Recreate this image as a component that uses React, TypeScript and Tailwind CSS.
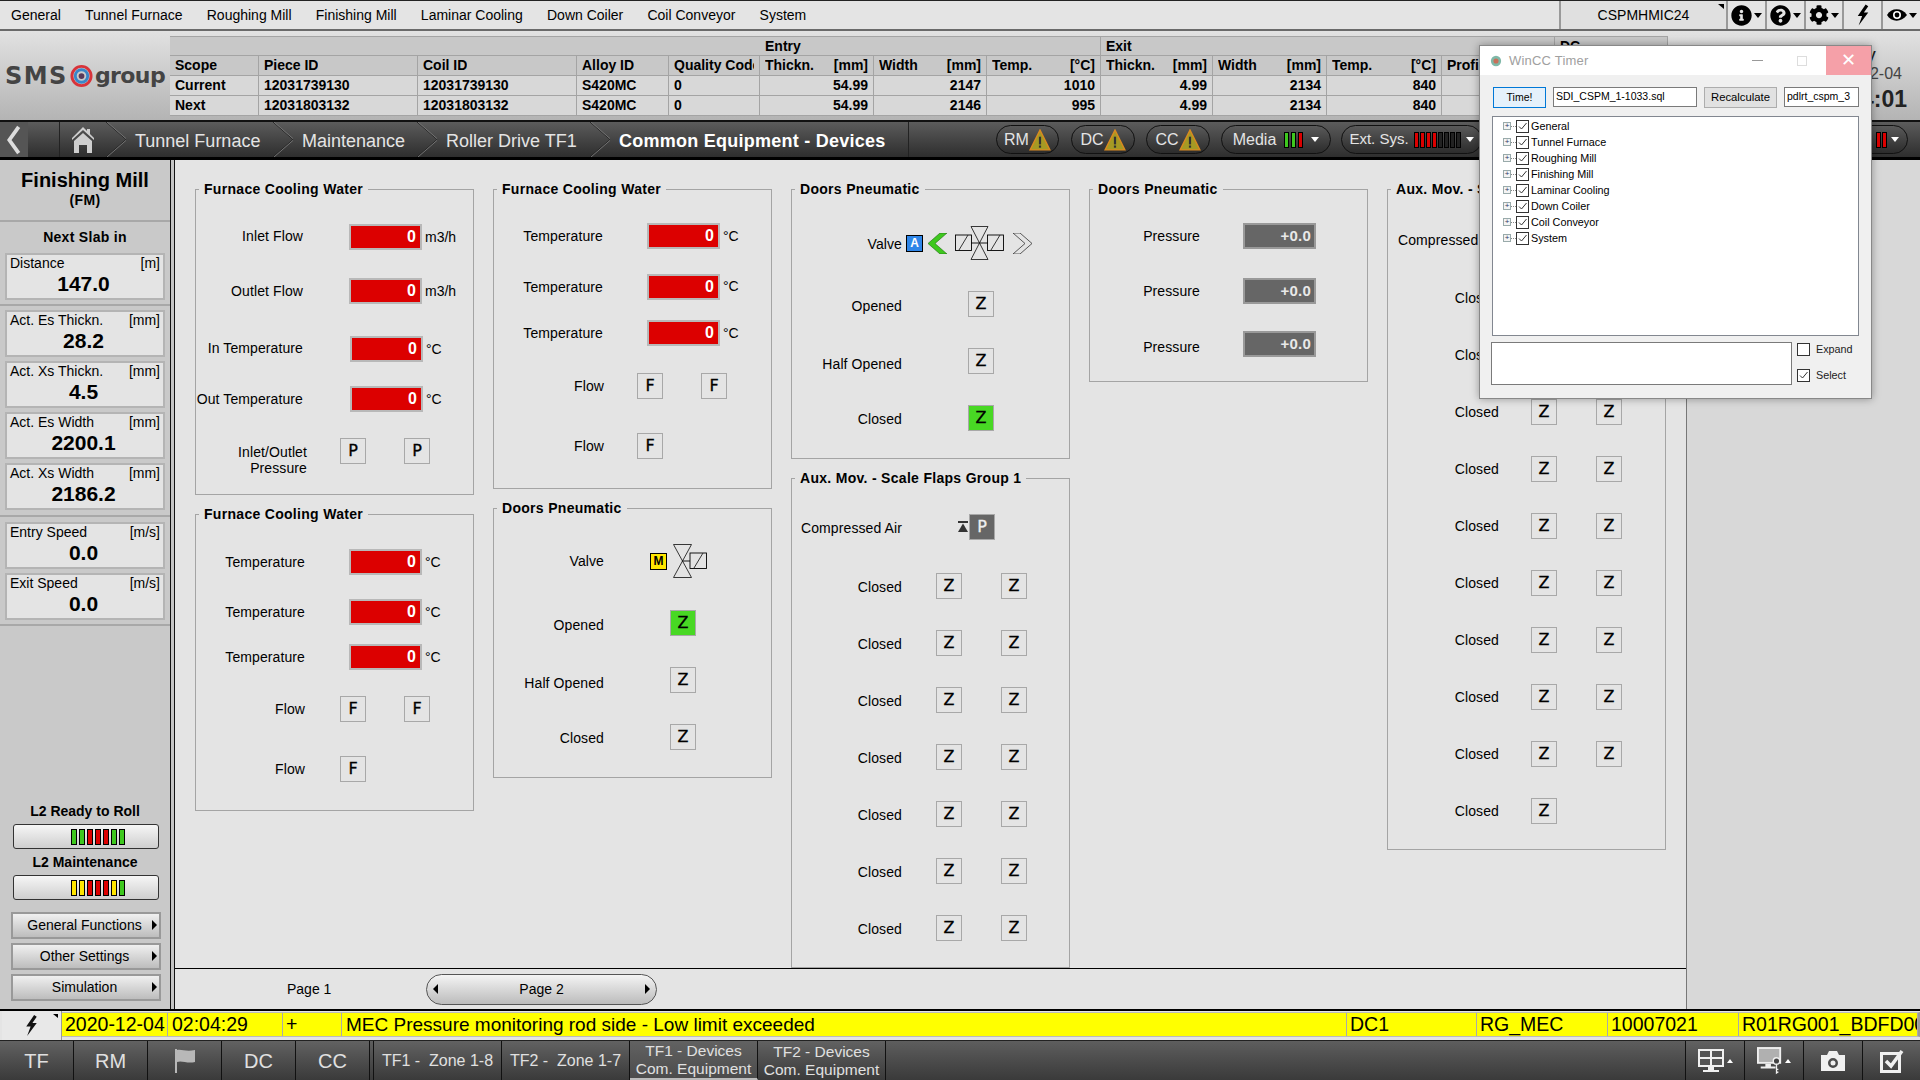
import type { ReactNode } from 'react';
import { FaCog, FaInfoCircle, FaQuestionCircle } from 'react-icons/fa';

const MENU = ['General', 'Tunnel Furnace', 'Roughing Mill', 'Finishing Mill', 'Laminar Cooling', 'Down Coiler', 'Coil Conveyor', 'System'];

function Bolt({ className }: { className?: string }) {
  return (
    <svg viewBox="0 0 16 24" className={className} fill="currentColor">
      <path d="M11 0 2 13h5L3 24l11-15H9l5-7z" />
    </svg>
  );
}

function Caret({ className }: { className?: string }) {
  return <span className={`inline-block w-0 h-0 border-x-[4px] border-x-transparent border-t-[5px] ${className ?? 'border-t-white'}`} />;
}

function Arrow({ dir }: { dir: 'left' | 'right' }) {
  return dir === 'right'
    ? <span className="block w-0 h-0 border-y-[5px] border-y-transparent border-l-[5px] border-l-black" />
    : <span className="block w-0 h-0 border-y-[5px] border-y-transparent border-r-[5px] border-r-black" />;
}

function TopBar() {
  return (
    <div className="h-[31px] flex bg-[#e4e4e4] border-t border-t-[#222] border-b-2 border-b-[#6a6a6a] text-[14px] text-black">
      <div className="flex-1 flex items-center gap-[24.2px] pl-[11px]">
        {MENU.map(m => <span key={m}>{m}</span>)}
      </div>
      <div className="w-[167px] flex items-center justify-center border-l-2 border-l-[#999] bg-[#e0e0e0] relative">
        CSPMHMIC24
        <span className="absolute top-[3px] right-[2px] w-0 h-0 border-l-[6px] border-l-transparent border-t-[5px] border-t-black" />
      </div>
      <div className="w-[194px] flex">
        <TopIcon><FaInfoCircle className="w-[21px] h-[21px]" /><Caret className="border-t-black" /></TopIcon>
        <TopIcon><FaQuestionCircle className="w-[21px] h-[21px]" /><Caret className="border-t-black" /></TopIcon>
        <TopIcon><FaCog className="w-[20px] h-[20px]" /><Caret className="border-t-black" /></TopIcon>
        <TopIcon><Bolt className="w-[14px] h-[24px]" /></TopIcon>
        <TopIcon>
          <svg viewBox="0 0 20 16" className="w-[20px] h-[16px]">
            <path d="M0 8c4-7 14-8 20 0-6 8-16 7-20 0z" fill="black" />
            <circle cx="10" cy="8" r="4" fill="white" />
            <circle cx="10" cy="8" r="2.4" fill="black" />
          </svg>
          <Caret className="border-t-black" />
        </TopIcon>
      </div>
    </div>
  );
}

function TopIcon({ children }: { children: ReactNode }) {
  return <div className="flex-1 flex items-center justify-center gap-[2px] border-l-2 border-l-[#999] text-black">{children}</div>;
}

const cellBase = 'border-r border-b border-[#a4a4a4] flex items-center px-[5px] h-[20px] whitespace-nowrap overflow-hidden';

function Hd({ label, unit }: { label: string; unit?: string }) {
  return (
    <div className={`${cellBase} justify-between bg-[#c8c8c8]`}>
      <span className="min-w-0 overflow-hidden">{label}</span>{unit && <span>{unit}</span>}
    </div>
  );
}

function DataRow({ cells }: { cells: string[] }) {
  return (
    <>
      {cells.map((c, i) => (
        <div key={i} className={`${cellBase} bg-[#d8d8d8] ${i > 4 ? 'justify-end' : ''}`}>{c}</div>
      ))}
    </>
  );
}

function Header() {
  return (
    <div className="h-[89px] flex bg-gradient-to-b from-[#e2e2e2] to-[#b4b4b4] text-[14px] font-bold text-black relative">
      <div className="w-[170px] flex items-center justify-center gap-[2px] text-[#444] text-[22px] font-['DejaVu_Sans',sans-serif]">
        <span className="text-[24px] tracking-[1.5px]">SMS</span>
        <svg viewBox="0 0 24 24" className="w-[23px] h-[24px]">
          <circle cx="12" cy="12" r="10" fill="none" stroke="#d8333a" strokeWidth="3" />
          <circle cx="12" cy="12" r="6.5" fill="none" stroke="#3a86c8" strokeWidth="3" />
          <circle cx="12" cy="12" r="3" fill="#5a3a5a" />
        </svg>
        <span className="tracking-[-0.6px]">group</span>
      </div>
      <div className="mt-[5px] w-[1498px] grid grid-cols-[89px_159px_159px_92px_91px_114px_113px_114px_112px_114px_115px_113px_113px] content-start">
        <div className="col-span-5 h-[20px] bg-[#c8c8c8] border-b border-[#a4a4a4] border-t" />
        <div className="col-span-3 h-[20px] bg-[#c8c8c8] border-b border-r border-t border-[#a4a4a4] flex items-center px-[5px]">Entry</div>
        <div className="col-span-4 h-[20px] bg-[#c8c8c8] border-b border-r border-t border-[#a4a4a4] flex items-center px-[5px]">Exit</div>
        <div className="h-[20px] bg-[#c8c8c8] border-b border-r border-t border-[#a4a4a4] flex items-center px-[5px]">DC</div>
        <Hd label="Scope" />
        <Hd label="Piece ID" />
        <Hd label="Coil ID" />
        <Hd label="Alloy ID" />
        <Hd label="Quality Code" />
        <Hd label="Thickn." unit="[mm]" />
        <Hd label="Width" unit="[mm]" />
        <Hd label="Temp." unit="[°C]" />
        <Hd label="Thickn." unit="[mm]" />
        <Hd label="Width" unit="[mm]" />
        <Hd label="Temp." unit="[°C]" />
        <Hd label="Profile" />
        <Hd label="Temp." />
        <DataRow cells={['Current', '12031739130', '12031739130', 'S420MC', '0', '54.99', '2147', '1010', '4.99', '2134', '840', '', '']} />
        <DataRow cells={['Next', '12031803132', '12031803132', 'S420MC', '0', '54.99', '2146', '995', '4.99', '2134', '840', '', '']} />
      </div>
      <div className="flex-1 flex flex-col items-center pl-[134px] text-[#222] font-normal whitespace-nowrap">
        <span className="mt-[13px] mr-[24px] text-[20px] leading-[22px]">Today</span>
        <span className="text-[16px] leading-[16px] text-[#444]">2020-12-04</span>
        <span className="mt-[5px] text-[23px] leading-[25px] font-bold">02:04:01</span>
      </div>
    </div>
  );
}

function Crumb({ label, className }: { label: string; className: string }) {
  return (
    <div className={`relative h-full flex items-center pt-[3px] ${className}`}>
      <svg viewBox="0 0 20 40" preserveAspectRatio="none" className="absolute left-0 top-0 w-[20px] h-full">
        <path d="M0 0l20 20L0 40" fill="none" stroke="#222" strokeWidth="1" />
        <path d="M1 0l20 20L1 40" fill="none" stroke="#777" strokeWidth="1" />
      </svg>
      {label}
    </div>
  );
}

function Warn() {
  return (
    <svg viewBox="0 0 20 20" className="w-[22px] h-[22px]">
      <path d="M10 1 19 19H1z" fill="#a59a24" stroke="#d98a20" strokeWidth="1.3" />
      <rect x="9" y="7" width="2" height="7" fill="#333" />
      <rect x="9" y="15" width="2" height="2" fill="#333" />
    </svg>
  );
}

function Bars({ colors, gapClass }: { colors: string[]; gapClass: string }) {
  return (
    <span className={`flex ${gapClass}`}>
      {colors.map((c, i) => <span key={i} className={`w-[5px] h-[16px] border border-black ${c}`} />)}
    </span>
  );
}

const R = 'bg-[#dc0000]';
const G = 'bg-[#3ec81e]';
const Y = 'bg-[#ffe600]';
const K = 'bg-[#222]';

function Pill({ className, children }: { className: string; children: ReactNode }) {
  return (
    <div className={`h-[29px] rounded-full border border-[#111] bg-gradient-to-b from-[#5a5a5a] to-[#2c2c2c] flex items-center justify-center ${className}`}>
      {children}
    </div>
  );
}

function Breadcrumb() {
  return (
    <div className="h-[40px] flex bg-gradient-to-b from-[#5c5c5c] to-[#2e2e2e] border-b-[3px] border-b-black border-t-2 border-t-[#111] text-[18px] text-[#e4e4e4]">
      <div className="w-[28px] flex items-center justify-center bg-[#555]">
        <svg viewBox="0 0 18 32" className="w-[18px] h-[30px]"><path d="M14 2 4 16l10 14" fill="none" stroke="#ddd" strokeWidth="4" /></svg>
      </div>
      <div className="w-[32px] border-r border-r-[#222]" />
      <div className="w-[46px] flex items-center justify-center">
        <svg viewBox="0 0 24 28" className="w-[24px] h-[28px]" fill="#cfcfcf">
          <path d="M12 1 1 12v2l11-10 11 10v-2l-4-4V3h-3v2z" />
          <path fillRule="evenodd" d="M3 15 12 7l9 8v12h-5v-8H8v8H3z" />
        </svg>
      </div>
      <Crumb label="Tunnel Furnace" className="w-[167px] pl-[29px]" />
      <Crumb label="Maintenance" className="w-[144px] pl-[29px]" />
      <Crumb label="Roller Drive TF1" className="w-[173px] pl-[29px]" />
      <Crumb label="Common Equipment - Devices" className="w-[318px] pl-[29px] font-bold text-white tracking-[0.25px]" />
      <div className="border-l border-l-[#222] flex-1 flex items-center pl-[87px] text-[16px]">
        <Pill className="w-[63px] mr-[12px]">RM<Warn /></Pill>
        <Pill className="w-[64px] mr-[11px]">DC<Warn /></Pill>
        <Pill className="w-[64px] mr-[11px]">CC<Warn /></Pill>
        <Pill className="w-[110px] mr-[10px] gap-[8px]">Media<Bars colors={[G, G, R]} gapClass="gap-[2px]" /><Caret /></Pill>
        <Pill className="w-[141px] mr-[10px] gap-[5px] text-[15px]">Ext. Sys.<Bars colors={[R, R, R, R, K, K, K, K]} gapClass="gap-[1px]" /><Caret /></Pill>
        <Pill className="w-[416px] justify-end pr-[8px] gap-[4px]"><Bars colors={[R, R]} gapClass="gap-[1px]" /><Caret /></Pill>
      </div>
    </div>
  );
}

function InfoCard({ label, unit, value, className }: { label: string; unit: string; value: string; className: string }) {
  return (
    <div className={`w-[160px] h-[47px] mx-[5px] bg-[#e4e4e4] border-2 border-[#b4b4b4] flex flex-col ${className}`}>
      <div className="flex justify-between pl-[3px] pr-[3px] text-[14px] leading-[17px]">
        <span>{label}</span><span>{unit}</span>
      </div>
      <div className="text-center text-[21px] font-bold leading-[24px] -ml-[3px]">{value}</div>
    </div>
  );
}

function StatusButton({ colors }: { colors: string[] }) {
  return (
    <div className="w-[146px] h-[25px] mx-[13px] rounded-[3px] border border-[#333] bg-gradient-to-b from-[#f6f6f6] to-[#cfcfcf] flex items-center justify-end pr-[33px]">
      <span className="flex gap-[2px]">
        {colors.map((c, i) => <span key={i} className={`w-[6px] h-[16px] border border-black ${c}`} />)}
      </span>
    </div>
  );
}

function SideButton({ label }: { label: string }) {
  return (
    <div className="relative w-[150px] h-[27px] mx-[11px] border-2 border-[#999] bg-gradient-to-b from-[#f0f0f0] to-[#bdbdbd] flex items-center justify-center pr-[3px] text-[14px]">
      {label}
      <span className="absolute right-[2px] top-[6px]"><Arrow dir="right" /></span>
    </div>
  );
}

function Sidebar() {
  return (
    <div className="w-[170px] flex flex-col bg-[#c9c9c9] text-black">
      <div className="h-[62px] border-b-2 border-b-[#a8a8a8] flex flex-col items-center pt-[8px]">
        <span className="text-[20px] font-bold leading-[24px]">Finishing Mill</span>
        <span className="text-[14px] font-bold leading-[16px] tracking-[0.4px]">(FM)</span>
      </div>
      <div className="h-[31px] flex items-center justify-center text-[14px] font-bold tracking-[0.3px]">Next Slab in</div>
      <InfoCard label="Distance" unit="[m]" value="147.0" className="mb-[4px]" />
      <div className="border-t-2 border-t-[#a8a8a8] mb-[4px]" />
      <InfoCard label="Act. Es Thickn." unit="[mm]" value="28.2" className="mb-[4px]" />
      <InfoCard label="Act. Xs Thickn." unit="[mm]" value="4.5" className="mb-[4px]" />
      <InfoCard label="Act. Es Width" unit="[mm]" value="2200.1" className="mb-[4px]" />
      <InfoCard label="Act. Xs Width" unit="[mm]" value="2186.2" className="mb-[5px]" />
      <div className="border-t-2 border-t-[#a8a8a8] mb-[5px]" />
      <InfoCard label="Entry Speed" unit="[m/s]" value="0.0" className="mb-[4px]" />
      <InfoCard label="Exit Speed" unit="[m/s]" value="0.0" className="mb-[4px]" />
      <div className="border-t-2 border-t-[#a8a8a8]" />
      <div className="flex-1 flex flex-col justify-end pb-[8px]">
        <div className="h-[25px] flex items-center justify-center text-[14px] font-bold">L2 Ready to Roll</div>
        <StatusButton colors={[G, G, R, R, R, G, G]} />
        <div className="h-[26px] flex items-center justify-center text-[14px] font-bold">L2 Maintenance</div>
        <StatusButton colors={[Y, Y, R, R, R, Y, G]} />
        <div className="h-[12px]" />
        <SideButton label="General Functions" />
        <div className="h-[4px]" />
        <SideButton label="Other Settings" />
        <div className="h-[4px]" />
        <SideButton label="Simulation" />
      </div>
    </div>
  );
}

function Panel({ title, className, children }: { title: string; className: string; children: ReactNode }) {
  return (
    <div className={`relative w-[279px] border border-[#a4a4a4] shrink-0 ${className}`}>
      <span className="absolute -top-[10px] left-[3px] px-[5px] bg-[#e4e4e4] text-[14px] leading-[18px] font-bold tracking-[0.3px] whitespace-nowrap">{title}</span>
      {children}
    </div>
  );
}

function Row({ label, rowClass, labelClass, children }: { label: ReactNode; rowClass: string; labelClass: string; children?: ReactNode }) {
  return (
    <div className={`flex items-center ${rowClass}`}>
      <div className={`text-right text-[14px] leading-[16px] tracking-[0.1px] shrink-0 whitespace-nowrap ${labelClass}`}>{label}</div>
      {children}
    </div>
  );
}

function Value({ className, unit }: { className: string; unit: string }) {
  return (
    <>
      <div className={`w-[73px] h-[26px] bg-[#dc0000] border-2 border-[#b8b8b8] flex items-center justify-end pr-[2px] text-white font-bold text-[16px] ${className}`}>
        <span className="px-[2px]">0</span>
      </div>
      <span className="ml-[3px] text-[14px]">{unit}</span>
    </>
  );
}

function Pressure({ className }: { className: string }) {
  return (
    <div className={`w-[73px] h-[26px] bg-[#666] border-2 border-[#999] flex items-center justify-end pr-[3px] text-[#e8e8e8] font-bold text-[15px] tracking-[0.2px] ${className}`}>+0.0</div>
  );
}

function Key({ letter, className, on, dark }: { letter: string; className?: string; on?: boolean; dark?: boolean }) {
  const bg = on ? 'bg-[#48d824] text-black' : dark ? 'bg-[#666] text-[#eee]' : 'text-black';
  return (
    <div className={`w-[26px] h-[26px] shrink-0 border border-[#a8a8a8] flex items-center justify-center text-[16px] font-['DejaVu_Sans',sans-serif] [-webkit-text-stroke:0.3px] ${bg} ${className ?? ''}`}>{letter}</div>
  );
}

function ActBox({ letter, className }: { letter: string; className: string }) {
  return <div className={`w-[17px] h-[17px] border border-black flex items-center justify-center text-[12px] font-bold ${className}`}>{letter}</div>;
}

function ValveDouble() {
  return (
    <svg viewBox="0 0 49 34" className="w-[49px] h-[34px] ml-[8px]" fill="none" stroke="#222" strokeWidth="0.9">
      <path d="M16 0.5h17L16 33.5h17z" />
      <rect x="0.5" y="9" width="16" height="15.5" stroke="#000" />
      <path d="M4 24l9-15" />
      <rect x="32.5" y="9" width="16" height="15.5" stroke="#000" />
      <path d="M36 24l9-15" />
      <path d="M16 17h17" stroke="#000" />
    </svg>
  );
}

function ValveSingle() {
  return (
    <svg viewBox="0 0 34 34" className="w-[34px] h-[34px] ml-[6px]" fill="none" stroke="#222" strokeWidth="0.9">
      <path d="M0.5 0.5h18L0.5 33.5h18z" />
      <rect x="17" y="9" width="16.5" height="15.5" stroke="#000" />
      <path d="M21 24l9-15" />
      <path d="M9 17h8" stroke="#000" />
    </svg>
  );
}

function AirIcon({ className }: { className: string }) {
  return (
    <svg viewBox="0 0 10 11" className={`w-[10px] h-[11px] ${className}`} fill="#333">
      <rect x="0" y="0" width="10" height="2" />
      <path d="M5 2.5 10 11H0z" />
    </svg>
  );
}

function ClosedRows({ rowCount, labelClass, firstClass, secondClass }: { rowCount: number; labelClass: string; firstClass: string; secondClass: string }) {
  return (
    <>
      {Array.from({ length: rowCount }).map((_, i) => (
        <Row key={i} label="Closed" rowClass="h-[57px]" labelClass={labelClass}>
          <Key letter="Z" className={firstClass} />
          <Key letter="Z" className={secondClass} />
        </Row>
      ))}
    </>
  );
}

function Panels() {
  return (
    <div className="flex gap-[19px] pl-[20px] pt-[29px] h-[809px] border-b border-b-black text-black">
      <div className="flex flex-col gap-[19px]">
        <Panel title="Furnace Cooling Water" className="h-[306px] pt-[20px]">
          <Row label="Inlet Flow" rowClass="h-[54px]" labelClass="w-[107px] pb-[2px]"><Value className="ml-[46px]" unit="m3/h" /></Row>
          <Row label="Outlet Flow" rowClass="h-[54px]" labelClass="w-[107px]"><Value className="ml-[46px]" unit="m3/h" /></Row>
          <Row label="In Temperature" rowClass="h-[62px]" labelClass="w-[107px] pb-[2px]"><Value className="ml-[47px]" unit="°C" /></Row>
          <Row label="Out Temperature" rowClass="h-[38px]" labelClass="w-[107px]"><Value className="ml-[47px]" unit="°C" /></Row>
          <Row label={<>Inlet/Outlet<br />Pressure</>} rowClass="h-[66px]" labelClass="w-[111px] mt-[17px] leading-[16px]">
            <Key letter="P" className="ml-[33px]" />
            <Key letter="P" className="ml-[38px]" />
          </Row>
        </Panel>
        <Panel title="Furnace Cooling Water" className="h-[297px] pt-[20px]">
          <Row label="Temperature" rowClass="h-[54px]" labelClass="w-[109px]"><Value className="ml-[44px]" unit="°C" /></Row>
          <Row label="Temperature" rowClass="h-[46px]" labelClass="w-[109px]"><Value className="ml-[44px]" unit="°C" /></Row>
          <Row label="Temperature" rowClass="h-[44px]" labelClass="w-[109px]"><Value className="ml-[44px]" unit="°C" /></Row>
          <Row label="Flow" rowClass="h-[60px]" labelClass="w-[109px]">
            <Key letter="F" className="ml-[35px]" />
            <Key letter="F" className="ml-[38px]" />
          </Row>
          <Row label="Flow" rowClass="h-[60px]" labelClass="w-[109px]"><Key letter="F" className="ml-[35px]" /></Row>
        </Panel>
      </div>

      <div className="flex flex-col gap-[19px]">
        <Panel title="Furnace Cooling Water" className="h-[300px] pt-[20px]">
          <Row label="Temperature" rowClass="h-[52px]" labelClass="w-[109px]"><Value className="ml-[44px]" unit="°C" /></Row>
          <Row label="Temperature" rowClass="h-[49px]" labelClass="w-[109px]"><Value className="ml-[44px]" unit="°C" /></Row>
          <Row label="Temperature" rowClass="h-[44px]" labelClass="w-[109px]"><Value className="ml-[44px]" unit="°C" /></Row>
          <Row label="Flow" rowClass="h-[62px]" labelClass="w-[110px]">
            <Key letter="F" className="ml-[33px]" />
            <Key letter="F" className="ml-[38px]" />
          </Row>
          <Row label="Flow" rowClass="h-[58px]" labelClass="w-[110px]"><Key letter="F" className="ml-[33px]" /></Row>
        </Panel>
        <Panel title="Doors Pneumatic" className="h-[270px] pt-[21px]">
          <Row label="Valve" rowClass="h-[62px]" labelClass="w-[110px]">
            <ActBox letter="M" className="ml-[46px] bg-[#ffe600] text-black" />
            <ValveSingle />
          </Row>
          <Row label="Opened" rowClass="h-[62px]" labelClass="w-[110px] pt-[4px]"><Key letter="Z" on className="ml-[66px]" /></Row>
          <Row label="Half Opened" rowClass="h-[52px]" labelClass="w-[110px] pt-[6px]"><Key letter="Z" className="ml-[66px]" /></Row>
          <Row label="Closed" rowClass="h-[62px]" labelClass="w-[110px] pt-[2px]"><Key letter="Z" className="ml-[66px]" /></Row>
        </Panel>
      </div>

      <div className="flex flex-col gap-[19px]">
        <Panel title="Doors Pneumatic" className="h-[270px] pt-[23px]">
          <Row label="Valve" rowClass="h-[60px]" labelClass="w-[110px] pt-[2px]">
            <ActBox letter="A" className="ml-[4px] bg-[#2f86e8] text-white" />
            <svg viewBox="0 0 19 21" className="w-[19px] h-[21px] ml-[5px]"><path d="M12 0h7L7 10.5 19 21h-7L0 10.5z" fill="#3ec81e" stroke="#1e6a10" strokeWidth="0.6" /></svg>
            <ValveDouble />
            <svg viewBox="0 0 19 21" className="w-[19px] h-[21px] ml-[9px]"><path d="M7 0H0l12 10.5L0 21h7l12-10.5z" fill="none" stroke="#333" strokeWidth="0.8" /></svg>
          </Row>
          <Row label="Opened" rowClass="h-[62px]" labelClass="w-[110px] pt-[4px]"><Key letter="Z" className="ml-[66px]" /></Row>
          <Row label="Half Opened" rowClass="h-[52px]" labelClass="w-[110px] pt-[6px]"><Key letter="Z" className="ml-[66px]" /></Row>
          <Row label="Closed" rowClass="h-[62px]" labelClass="w-[110px] pt-[2px]"><Key letter="Z" on className="ml-[66px]" /></Row>
        </Panel>
        <Panel title="Aux. Mov. - Scale Flaps Group 1" className="h-[490px] pt-[19px]">
          <Row label="Compressed Air" rowClass="h-[57px]" labelClass="w-[110px] text-left pl-[8px] pt-[2px]">
            <AirIcon className="ml-[56px]" />
            <Key letter="P" dark className="ml-[1px]" />
          </Row>
          <div className="h-[2px]" />
          <ClosedRows rowCount={7} labelClass="w-[110px] pt-[2px]" firstClass="ml-[34px]" secondClass="ml-[39px]" />
        </Panel>
      </div>

      <Panel title="Doors Pneumatic" className="h-[193px] pt-[19px]">
        <Row label="Pressure" rowClass="h-[54px]" labelClass="w-[110px]"><Pressure className="ml-[43px]" /></Row>
        <Row label="Pressure" rowClass="h-[56px]" labelClass="w-[110px]"><Pressure className="ml-[43px]" /></Row>
        <Row label="Pressure" rowClass="h-[50px]" labelClass="w-[110px] pt-[6px]"><Pressure className="ml-[43px]" /></Row>
      </Panel>

      <Panel title="Aux. Mov. - Scale Flaps Group 2" className="h-[661px] pt-[20px]">
        <Row label="Compressed Air" rowClass="h-[59px]" labelClass="w-[111px] text-left pl-[9px]">
          <AirIcon className="ml-[56px]" />
          <Key letter="P" dark className="ml-[1px]" />
        </Row>
        <ClosedRows rowCount={9} labelClass="w-[111px]" firstClass="ml-[32px]" secondClass="ml-[39px]" />
        <Row label="Closed" rowClass="h-[57px]" labelClass="w-[111px]"><Key letter="Z" className="ml-[32px]" /></Row>
      </Panel>
    </div>
  );
}

function Body() {
  return (
    <div className="h-[849px] flex">
      <Sidebar />
      <div className="w-[5px] bg-[#c4c4c4] border-x border-x-[#111]" />
      <div className="w-[1512px] bg-[#e4e4e4] border-r border-r-[#777] flex flex-col">
        <Panels />
        <div className="flex-1 flex items-center text-[14px] text-black">
          <span className="ml-[112px] w-[139px]">Page 1</span>
          <div className="w-[231px] h-[31px] rounded-full border border-[#555] bg-gradient-to-b from-[#f4f4f4] to-[#bcbcbc] flex items-center justify-between px-[6px]">
            <Arrow dir="left" />
            <span>Page 2</span>
            <Arrow dir="right" />
          </div>
        </div>
      </div>
      <div className="flex-1 bg-[#d8d8d8]" />
    </div>
  );
}

function AlarmBar() {
  const cells = [
    ['w-[106px]', '2020-12-04'],
    ['w-[115px] pl-[4px]', '02:04:29'],
    ['w-[59px]', '+'],
    ['w-[1005px] pl-[4px] text-[19px]', 'MEC Pressure monitoring rod side - Low limit exceeded'],
    ['w-[130px]', 'DC1'],
    ['w-[131px]', 'RG_MEC'],
    ['w-[131px]', '10007021'],
    ['w-[179px]', 'R01RG001_BDFD001'],
  ];
  return (
    <div className="h-[31px] flex bg-[#e4e4e4] border-t-2 border-t-black text-[19.5px] text-black">
      <div className="relative w-[60px] ml-[2px] flex items-center justify-center bg-[#e8e8e8] border-r border-r-[#999]">
        <Bolt className="w-[15px] h-[21px] text-[#111]" />
        <span className="absolute top-[3px] right-[3px] w-0 h-0 border-l-[5px] border-l-transparent border-t-[4px] border-t-black" />
      </div>
      <div className="flex h-[25px] mt-[1px] border-y border-[#bbb] border-r-2 border-r-[#999]">
        {cells.map(([w, text]) => (
          <div key={text} className={`bg-[#ffff00] border-r border-r-[#aaa] px-[3px] leading-[23px] whitespace-nowrap overflow-hidden ${w}`}>{text}</div>
        ))}
      </div>
    </div>
  );
}

function NavButton({ className, children }: { className: string; children: ReactNode }) {
  return (
    <div className={`h-full flex items-center justify-center text-center border-r border-r-[#111] bg-gradient-to-b from-[#626262] to-[#3a3a3a] ${className}`}>
      {children}
    </div>
  );
}

function BottomNav() {
  return (
    <div className="h-[40px] flex bg-gradient-to-b from-[#5e5e5e] to-[#3a3a3a] text-[#e0e0e0] border-t border-t-[#222]">
      <NavButton className="w-[74px] text-[20px]">TF</NavButton>
      <NavButton className="w-[74px] text-[20px]">RM</NavButton>
      <NavButton className="w-[74px]">
        <svg viewBox="0 0 20 24" className="w-[20px] h-[24px]" fill="#b8b8b8">
          <rect x="0" y="0" width="2" height="24" />
          <path d="M2 1c5-1 9 2 18 0v12c-8 2-13-2-18 0z" />
        </svg>
      </NavButton>
      <NavButton className="w-[74px] text-[20px]">DC</NavButton>
      <NavButton className="w-[74px] text-[20px]">CC</NavButton>
      <div className="w-[4px] border-r border-r-[#111]" />
      <NavButton className="w-[128px] text-[16px] from-[#4a4a4a] to-[#3a3a3a]">TF1 -&nbsp; Zone 1-8</NavButton>
      <NavButton className="w-[128px] text-[16px] from-[#4a4a4a] to-[#3a3a3a]">TF2 -&nbsp; Zone 1-7</NavButton>
      <NavButton className="w-[128px] text-[15.5px] leading-[18px] from-[#2e2e2e] to-[#4c4c4c] border-b-2 border-b-[#bbb]">
        <span>TF1 - Devices<br />Com. Equipment</span>
      </NavButton>
      <NavButton className="w-[128px] text-[15.5px] leading-[18px] from-[#4a4a4a] to-[#3a3a3a]">
        <span>TF2 - Devices<br />Com. Equipment</span>
      </NavButton>
      <div className="w-[800px] border-r border-r-[#111]" />
      <NavButton className="w-[59px] gap-[3px]">
        <svg viewBox="0 0 26 24" className="w-[26px] h-[24px]">
          <rect x="1" y="1" width="24" height="16" fill="#555" stroke="#f0f0f0" strokeWidth="2" />
          <path d="M1 9h24M13 1v16" stroke="#f0f0f0" strokeWidth="2" />
          <path d="M10 18h6v3h5v2H5v-2h5z" fill="#f0f0f0" />
        </svg>
        <span className="w-0 h-0 border-x-[3px] border-x-transparent border-b-[4px] border-b-white" />
      </NavButton>
      <NavButton className="w-[59px] gap-[2px]">
        <svg viewBox="0 0 28 30" className="w-[26px] h-[28px]">
          <rect x="1" y="1" width="24" height="16" fill="#b0b0b0" stroke="#f0f0f0" strokeWidth="2" />
          <path d="M9 18h6v3h5v2H4v-2h5z" fill="#f0f0f0" />
          <circle cx="21" cy="15" r="3.5" fill="#444" stroke="#f0f0f0" strokeWidth="1.5" />
          <path d="M21 18.5V28l2-1.5M21 24h2" stroke="#f0f0f0" strokeWidth="1.4" fill="none" />
        </svg>
        <span className="w-0 h-0 border-x-[3px] border-x-transparent border-b-[4px] border-b-white" />
      </NavButton>
      <NavButton className="w-[59px]">
        <svg viewBox="0 0 24 20" className="w-[24px] h-[20px]">
          <path fillRule="evenodd" d="M0 4h6l2-4h8l2 4h6v16H0zM12 7a5 5 0 1 0 0 10 5 5 0 0 0 0-10z" fill="#f0f0f0" />
          <circle cx="12" cy="12" r="2.5" fill="#f0f0f0" />
        </svg>
      </NavButton>
      <div className="flex-1 flex items-center justify-center bg-gradient-to-b from-[#626262] to-[#3a3a3a]">
        <svg viewBox="0 0 24 24" className="w-[24px] h-[24px]" fill="none" stroke="#f0f0f0">
          <rect x="1.5" y="4.5" width="18" height="18" strokeWidth="3" />
          <path d="M6 12l5 5L22 2" strokeWidth="3.5" />
        </svg>
      </div>
    </div>
  );
}

function CheckBox({ checked, className }: { checked?: boolean; className?: string }) {
  return (
    <span className={`w-[13px] h-[13px] border border-[#333] bg-white flex items-center justify-center shrink-0 ${className ?? ''}`}>
      {checked && (
        <svg viewBox="0 0 11 11" className="w-[11px] h-[11px]"><path d="M2 5.5 4.5 8 9.5 2" fill="none" stroke="#333" strokeWidth="1" /></svg>
      )}
    </span>
  );
}

function TimerWindow() {
  return (
    <div className="absolute left-[1479px] top-[45px] w-[393px] h-[354px] bg-[#f0f0f0] border border-[#888] shadow-[0_0_8px_rgba(0,0,0,0.35)] flex flex-col font-['Liberation_Sans',sans-serif] text-[10.8px] text-black">
      <div className="h-[29px] bg-white flex items-center shrink-0">
        <svg viewBox="0 0 14 14" className="w-[12px] h-[12px] ml-[10px]">
          <circle cx="7" cy="7" r="6" fill="#7fb8a8" />
          <circle cx="7" cy="7" r="3" fill="#c8705a" />
        </svg>
        <span className="ml-[7px] text-[13px] text-[#a0a0a0] tracking-[0.2px] whitespace-nowrap">WinCC Timer</span>
        <span className="ml-auto w-[11px] border-t border-t-[#999]" />
        <span className="ml-[34px] w-[10px] h-[10px] border border-[#ddd]" />
        <span className="ml-[19px] w-[45px] h-[29px] bg-[#f5a0a8] flex items-center justify-center text-white text-[18px] font-light">✕</span>
      </div>
      <div className="flex items-start mt-[12px] ml-[13px] gap-[7px] h-[21px]">
        <div className="w-[53px] h-[21px] bg-[#e5f1fb] border border-[#0078d7] flex items-center justify-center text-[10.5px]">Time!</div>
        <div className="w-[144px] h-[20px] bg-white border border-[#7a7a7a] flex items-center px-[2px] text-[10.5px]">SDI_CSPM_1-1033.sql</div>
        <div className="w-[73px] h-[21px] bg-[#e1e1e1] border border-[#adadad] flex items-center justify-center text-[11.3px]">Recalculate</div>
        <div className="w-[75px] h-[20px] bg-white border border-[#7a7a7a] flex items-center px-[2px] text-[10.5px]">pdlrt_cspm_3</div>
      </div>
      <div className="ml-[12px] mt-[8px] w-[367px] h-[220px] bg-white border border-[#828790] pt-[1px] pl-[10px] shrink-0">
        {MENU.map(name => (
          <div key={name} className="h-[16px] flex items-center">
            <span className="w-[8px] h-[8px] border border-[#9aa] text-[#336] bg-[#f4f4f4] flex items-center justify-center text-[8px] leading-[8px]">+</span>
            <span className="w-[5px] border-t border-dotted border-t-[#888]" />
            <CheckBox checked />
            <span className="ml-[2px]">{name}</span>
          </div>
        ))}
      </div>
      <div className="flex mt-[6px] ml-[11px]">
        <div className="w-[301px] h-[43px] bg-white border border-[#7a7a7a]" />
        <div className="ml-[5px] flex flex-col">
          <div className="flex items-center h-[13px] mt-[1px]"><CheckBox /><span className="ml-[6px] text-[#222]">Expand</span></div>
          <div className="flex items-center h-[13px] mt-[13px]"><CheckBox checked /><span className="ml-[6px] text-[#222]">Select</span></div>
        </div>
      </div>
    </div>
  );
}

export default function App() {
  return (
    <div className="relative w-[1920px] h-[1080px] overflow-hidden bg-[#d8d8d8] font-['Liberation_Sans',Arial,sans-serif]">
      <TopBar />
      <Header />
      <Breadcrumb />
      <Body />
      <AlarmBar />
      <BottomNav />
      <TimerWindow />
    </div>
  );
}
